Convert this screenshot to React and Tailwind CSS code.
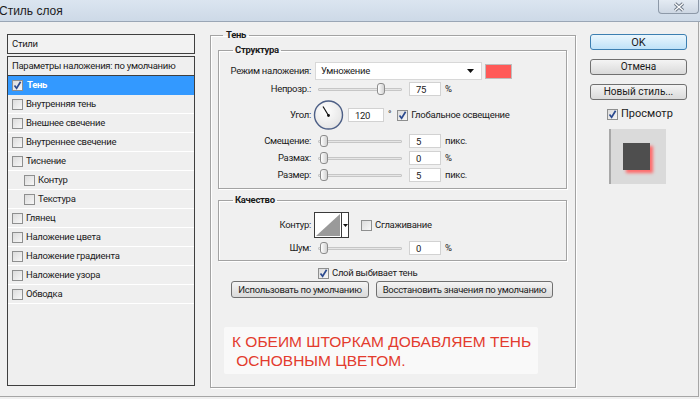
import React from "react";

const styles = [
  { name: "Внутренняя тень" },
  { name: "Внешнее свечение" },
  { name: "Внутреннее свечение" },
  { name: "Тиснение" },
  { name: "Контур", sub: true },
  { name: "Текстура", sub: true },
  { name: "Глянец" },
  { name: "Наложение цвета" },
  { name: "Наложение градиента" },
  { name: "Наложение узора" },
  { name: "Обводка" },
];

function Check({ checked }) {
  return (
    <span className="inline-flex w-[11px] h-[11px] shrink-0 items-center justify-center border border-[#8e8f8f] bg-gradient-to-br from-[#dcdcdc] to-[#f7f7f7]">
      {checked && (
        <svg width="9" height="9" viewBox="0 0 9 9">
          <path d="M1.5 4.5 L3.6 7.2 L7.6 0.8" fill="none" stroke="#2b4a8f" strokeWidth="1.7" />
        </svg>
      )}
    </span>
  );
}

function Slider({ value }) {
  // value 0..1, thumb slides along 76px
  return (
    <div className="relative w-[84px] h-[12px] shrink-0">
      <div className="absolute left-0 right-0 top-[5px] h-[3px] border border-[#c6c6c6] bg-[#e6e6e6] rounded-[1px]" />
      <div
        className="absolute top-0 w-[8px] h-[12px] rounded-[3px] border border-[#8c8c8c] bg-gradient-to-r from-[#ffffff] to-[#d2d2d2]"
        style={{ left: Math.round(value * 76) }}
      />
    </div>
  );
}

function Field({ value, w = "w-[32px]" }) {
  return (
    <div className={`${w} h-[14px] shrink-0 bg-white border border-[#d2d2d2] pl-[6px] leading-[13px]`}>
      {value}
    </div>
  );
}

function Label({ children }) {
  return <div className="w-[92px] shrink-0 text-right whitespace-nowrap">{children}</div>;
}

function Button({ children, primary, className = "" }) {
  return (
    <div
      className={`h-[16px] flex items-center justify-center whitespace-nowrap rounded-[3px] leading-none ${
        primary
          ? "border border-[#3c7fb1] bg-gradient-to-b from-[#eaf6fd] to-[#bfe2f8]"
          : "border border-[#707070] bg-gradient-to-b from-[#f4f4f4] to-[#dadada]"
      } ${className}`}
    >
      {children}
    </div>
  );
}

export default function App() {
  return (
    <div className="w-[700px] h-[399px] overflow-hidden bg-[#f0f0f0] text-[#1b1b1b] text-[9.5px] tracking-[-0.3px] font-['Roboto','Liberation_Sans',Arial,sans-serif]">
      {/* title bar */}
      <div className="h-[22px] flex items-start border-b border-[#9aa6b5] bg-gradient-to-b from-[#dbe5f0] to-[#cdd9e7]">
        <div className="mt-[4px] -ml-[1px] text-[12px] tracking-normal leading-[14px] font-['Liberation_Sans',Arial,sans-serif]">Стиль слоя</div>
        <div className="ml-auto mr-[1px] w-[41px] h-[14px] flex items-center justify-center border border-t-0 border-[#8d99a8] rounded-b-[4px] bg-gradient-to-b from-[#e4ebf3] to-[#cdd7e3]">
          <svg width="12" height="10" viewBox="0 0 12 10">
            <path d="M2 1.5 L10 8.5 M10 1.5 L2 8.5" stroke="#6b7684" strokeWidth="3.2" />
            <path d="M2 1.5 L10 8.5 M10 1.5 L2 8.5" stroke="#ffffff" strokeWidth="1.3" />
          </svg>
        </div>
      </div>

      {/* body */}
      <div className="h-[375px] w-[699px] flex items-start border-b border-r border-[#a6a6a6]">
        {/* left: styles list */}
        <div className="ml-[7px] mt-[12px] w-[188px] flex flex-col">
          <div className="h-[20px] border border-[#3f3f3f] bg-[#f2f2f2] pl-[4px] leading-[18px]">
            Стили
          </div>
          <div className="mt-[2px] h-[330px] border border-[#3f3f3f] bg-[#efefef]">
            <div className="h-[19px] border-b border-[#3f3f3f] pl-[4px] leading-[18px] whitespace-nowrap">
              Параметры наложения: по умолчанию
            </div>
            <div className="h-[19px] bg-[#3399ff] flex items-center gap-[4px] pl-[4px] text-white font-bold">
              <Check checked />
              Тень
            </div>
            {styles.map((s) => (
              <div
                key={s.name}
                className={`h-[19px] border-b border-white flex items-center gap-[3px] ${s.sub ? "pl-[16px]" : "pl-[4px]"}`}
              >
                <Check />
                {s.name}
              </div>
            ))}
          </div>
        </div>

        {/* center: shadow settings */}
        <fieldset className="ml-[15px] mt-[7px] w-[366px] h-[359px] border border-[#a3a3a3] shadow-[inset_1px_1px_0_#fff,1px_1px_0_#fff]">
          <legend className="ml-[12px] px-[3px] leading-[12px] font-bold">Тень</legend>

          <fieldset className="ml-[7px] mt-[3px] w-[349px] border border-[#a3a3a3] shadow-[inset_1px_1px_0_#fff,1px_1px_0_#fff] pb-[6px]">
            <legend className="ml-[14px] px-[2px] leading-[12px] font-bold">Структура</legend>

            <div className="mt-[6px] h-[18px] flex items-center">
              <Label>Режим наложения:</Label>
              <div className="ml-[4px] w-[167px] h-[18px] bg-white border border-[#d8d8d8] flex items-center pl-[5px] pr-[7px]">
                Умножение
                <svg className="ml-auto" width="7" height="4" viewBox="0 0 7 4">
                  <path d="M0 0 H7 L3.5 4 Z" fill="#111" />
                </svg>
              </div>
              <div className="ml-[3px] w-[27px] h-[15px] bg-[#ff5a58] border border-[#bdbdbd]" />
            </div>

            <div className="mt-[2px] h-[14px] flex items-center">
              <Label>Непрозр.:</Label>
              <div className="ml-[7px]">
                <Slider value={0.78} />
              </div>
              <div className="ml-[7px]">
                <Field value="75" />
              </div>
              <span className="ml-[4px]">%</span>
            </div>

            <div className="mt-[4px] h-[30px] flex items-center">
              <Label>Угол:</Label>
              <svg className="ml-[2px] shrink-0" width="31" height="30" viewBox="0 0 31 30">
                <defs>
                  <radialGradient id="dial" cx="40%" cy="35%" r="70%">
                    <stop offset="0%" stopColor="#ffffff" />
                    <stop offset="100%" stopColor="#e3e3e3" />
                  </radialGradient>
                </defs>
                <circle cx="15.5" cy="15" r="14" fill="url(#dial)" stroke="#4d5f86" strokeWidth="1.4" />
                <path d="M15.5 15.5 L10 6.5" stroke="#111" strokeWidth="1.2" />
                <circle cx="15.5" cy="15.5" r="1.4" fill="#111" />
              </svg>
              <div className="ml-[4px]">
                <Field value="120" w="w-[36px]" />
              </div>
              <span className="ml-[4px] self-start mt-[7px]">°</span>
              <div className="ml-[6px] flex items-center gap-[3px]">
                <Check checked />
                Глобальное освещение
              </div>
            </div>

            {[
              ["Смещение:", "5", "пикс."],
              ["Размах:", "0", "%"],
              ["Размер:", "5", "пикс."],
            ].map(([label, v, unit], i) => (
              <div key={label} className={`${i === 0 ? "mt-[4px]" : "mt-[3px]"} h-[14px] flex items-center`}>
                <Label>{label}</Label>
                <div className="ml-[7px]">
                  <Slider value={0.02} />
                </div>
                <div className="ml-[7px]">
                  <Field value={v} />
                </div>
                <span className="ml-[4px]">{unit}</span>
              </div>
            ))}
          </fieldset>

          <fieldset className="ml-[7px] mt-[5px] w-[349px] border border-[#a3a3a3] shadow-[inset_1px_1px_0_#fff,1px_1px_0_#fff] pb-[5px]">
            <legend className="ml-[14px] px-[2px] leading-[12px] font-bold">Качество</legend>

            <div className="mt-[6px] h-[26px] flex items-center">
              <Label>Контур:</Label>
              <div className="ml-[3px] w-[35px] h-[26px] flex border border-[#3a3a3a] bg-white">
                <svg width="26" height="24" viewBox="0 0 26 24" className="shrink-0">
                  <path d="M1 23 L25 1 L25 23 Z" fill="#9a9a9a" />
                </svg>
                <div className="flex-1 border-l border-[#3a3a3a] flex items-center justify-center">
                  <svg width="5" height="3" viewBox="0 0 5 3">
                    <path d="M0 0 H5 L2.5 3 Z" fill="#111" />
                  </svg>
                </div>
              </div>
              <div className="ml-[12px] flex items-center gap-[3px]">
                <Check />
                Сглаживание
              </div>
            </div>

            <div className="mt-[3px] h-[14px] flex items-center">
              <Label>Шум:</Label>
              <div className="ml-[7px]">
                <Slider value={0.02} />
              </div>
              <div className="ml-[7px]">
                <Field value="0" />
              </div>
              <span className="ml-[4px]">%</span>
            </div>
          </fieldset>

          <div className="mt-[5px] h-[14px] ml-[107px] flex items-center gap-[3px]">
            <Check checked />
            Слой выбивает тень
          </div>

          <div className="mt-[1px] ml-[20px] flex gap-[7px]">
            <Button className="w-[138px] h-[17px]">Использовать по умолчанию</Button>
            <Button className="w-[177px] h-[17px]">Восстановить значения по умолчанию</Button>
          </div>

          <div className="mt-[29px] ml-[13px] w-[314px] h-[47px] bg-[#f9f9f9] rounded-[2px] pl-[8px] pt-[5px] text-[15.5px] tracking-normal leading-[19px] text-[#e33b2e] whitespace-pre font-['Liberation_Sans',Arial,sans-serif]">
            {"К ОБЕИМ ШТОРКАМ ДОБАВЛЯЕМ ТЕНЬ\n ОСНОВНЫМ ЦВЕТОМ."}
          </div>
        </fieldset>

        {/* right: buttons and preview */}
        <div className="ml-[14px] mt-[12px] w-[97px] flex flex-col text-[10px] tracking-normal">
          <Button primary className="h-[15px] text-[11px]">OK</Button>
          <Button className="mt-[9px] h-[16px]">Отмена</Button>
          <Button className="mt-[9px] h-[16px]">Новый стиль...</Button>
          <div className="mt-[6px] ml-[17px] flex items-center gap-[3px] text-[11px]">
            <Check checked />
            Просмотр
          </div>
          <div className="mt-[6px] ml-[19px] w-[57px] h-[55px] bg-[#dadada] border-l-2 border-[#a8a8a8] flex justify-center items-start pt-[14px] pr-[4px]">
            <div className="w-[27px] h-[27px] bg-[#4e4e4e] shadow-[3px_3px_3px_#ff6a6a]" />
          </div>
        </div>
      </div>
    </div>
  );
}
